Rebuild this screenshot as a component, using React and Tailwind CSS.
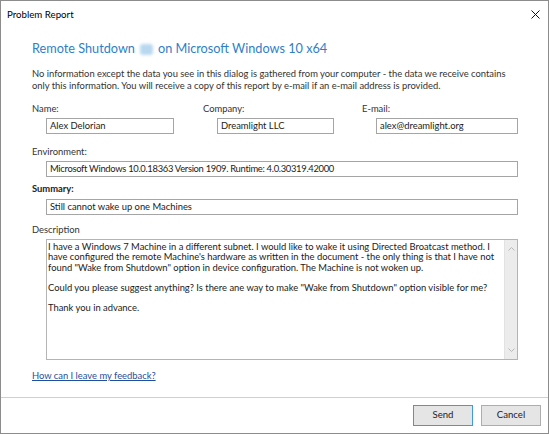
import React from "react";

function Field({ value, className }) {
  return (
    <div className={"h-[16px] border border-[#a5a5a5] bg-white flex items-center pl-[3px] text-[9.4px] text-[#1b1b1b] leading-none whitespace-nowrap " + className}>
      {value}
    </div>
  );
}

export default function App() {
  return (
    <div className="w-[549px] h-[434px] bg-white border border-[#8c8c8c] flex flex-col font-['Lato',sans-serif] text-[9.4px] text-[#333] box-border overflow-hidden">
      {/* Title bar */}
      <div className="h-[26px] shrink-0 flex items-center justify-between pl-[6px] pr-[8px]">
        <span className="text-[9.7px] text-black">Problem Report</span>
        <svg width="9" height="9" viewBox="0 0 9 9" className="mt-[1px]">
          <path d="M0.5 0.5 L8.5 8.5 M8.5 0.5 L0.5 8.5" stroke="#111" strokeWidth="1" />
        </svg>
      </div>

      {/* Body */}
      <div className="flex-1 flex flex-col pl-[31px] pr-[31px]">
        <div className="mt-[12px] h-[20px] flex items-center text-[12.7px] text-[#2e7fcb] whitespace-nowrap">
          <span>Remote Shutdown</span>
          <span className="inline-block w-[13px] h-[11px] mx-[5px] rounded-[3px] bg-[#b9d8f0] blur-[1.5px]" />
          <span>on Microsoft Windows 10 x64</span>
        </div>

        <div className="mt-[9px] leading-[12px] text-[#333]">
          No information except the data you see in this dialog is gathered from your computer - the data we receive contains only this information. You will receive a copy of this report by e-mail if an e-mail address is provided.
        </div>

        <div className="mt-[10px] grid grid-cols-[171px_159px_1fr]">
          <div className="leading-[13px]">Name:</div>
          <div className="leading-[13px]">Company:</div>
          <div className="leading-[13px]">E-mail:</div>
          <div className="pl-[14px] mt-[3px]"><Field value="Alex Delorian" className="w-[128px]" /></div>
          <div className="pl-[14px] mt-[3px]"><Field value="Dreamlight LLC" className="w-[117px]" /></div>
          <div className="pl-[14px] mt-[3px]"><Field value="alex@dreamlight.org" className="w-[142px]" /></div>
        </div>

        <div className="mt-[11px] leading-[13px]">Environment:</div>
        <div className="pl-[14px] mt-[3px]">
          <Field value="Microsoft Windows 10.0.18363 Version 1909. Runtime: 4.0.30319.42000" className="w-[472px] tracking-[-0.3px]" />
        </div>

        <div className="mt-[5px] leading-[13px] font-bold text-[#222]">Summary:</div>
        <div className="pl-[14px] mt-[4px]">
          <Field value="Still cannot wake up one Machines" className="w-[472px]" />
        </div>

        <div className="mt-[8px] leading-[13px]">Description</div>
        <div className="pl-[14px] mt-[3px]">
          <div className="w-[472px] h-[121px] border border-[#b4b4b4] flex bg-white">
            <div className="flex-1 pl-[1px] pt-[1.5px] text-[9.4px] leading-[10.8px] text-[#1b1b1b]">
              <p>I have a Windows 7 Machine in a different subnet. I would like to wake it using Directed Broatcast method. I have configured the remote Machine's hardware as written in the document - the only thing is that I have not found "Wake from Shutdown" option in device configuration. The Machine is not woken up.</p>
              <p className="mt-[9px]">Could you please suggest anything? Is there ane way to make "Wake from Shutdown" option visible for me?</p>
              <p className="mt-[9px]">Thank you in advance.</p>
            </div>
            <div className="w-[13px] bg-[#ececec] border-l border-[#e2e2e2] flex flex-col justify-between items-center py-[7px]">
              <svg width="7" height="4" viewBox="0 0 7 4"><path d="M0.5 3.5 L3.5 0.5 L6.5 3.5" fill="none" stroke="#b8b8b8" strokeWidth="1" /></svg>
              <svg width="7" height="4" viewBox="0 0 7 4"><path d="M0.5 0.5 L3.5 3.5 L6.5 0.5" fill="none" stroke="#b8b8b8" strokeWidth="1" /></svg>
            </div>
          </div>
        </div>

        <div className="mt-[9px] leading-[13px]">
          <a className="text-[#1f4fa0] underline underline-offset-[1px]">How can I leave my feedback?</a>
        </div>
      </div>

      {/* Footer */}
      <div className="h-[36px] shrink-0 border-t border-[#cfcfcf] flex items-center justify-end gap-[8px] pr-[7px] pb-[1px]">
        <button className="w-[60px] h-[21px] bg-[#e5e5e5] border border-[#3c9ae8] text-[9.6px] text-[#222] font-['Lato',sans-serif]">Send</button>
        <button className="w-[60px] h-[21px] bg-[#e5e5e5] border border-[#adadad] text-[9.6px] text-[#222] font-['Lato',sans-serif]">Cancel</button>
      </div>
    </div>
  );
}
